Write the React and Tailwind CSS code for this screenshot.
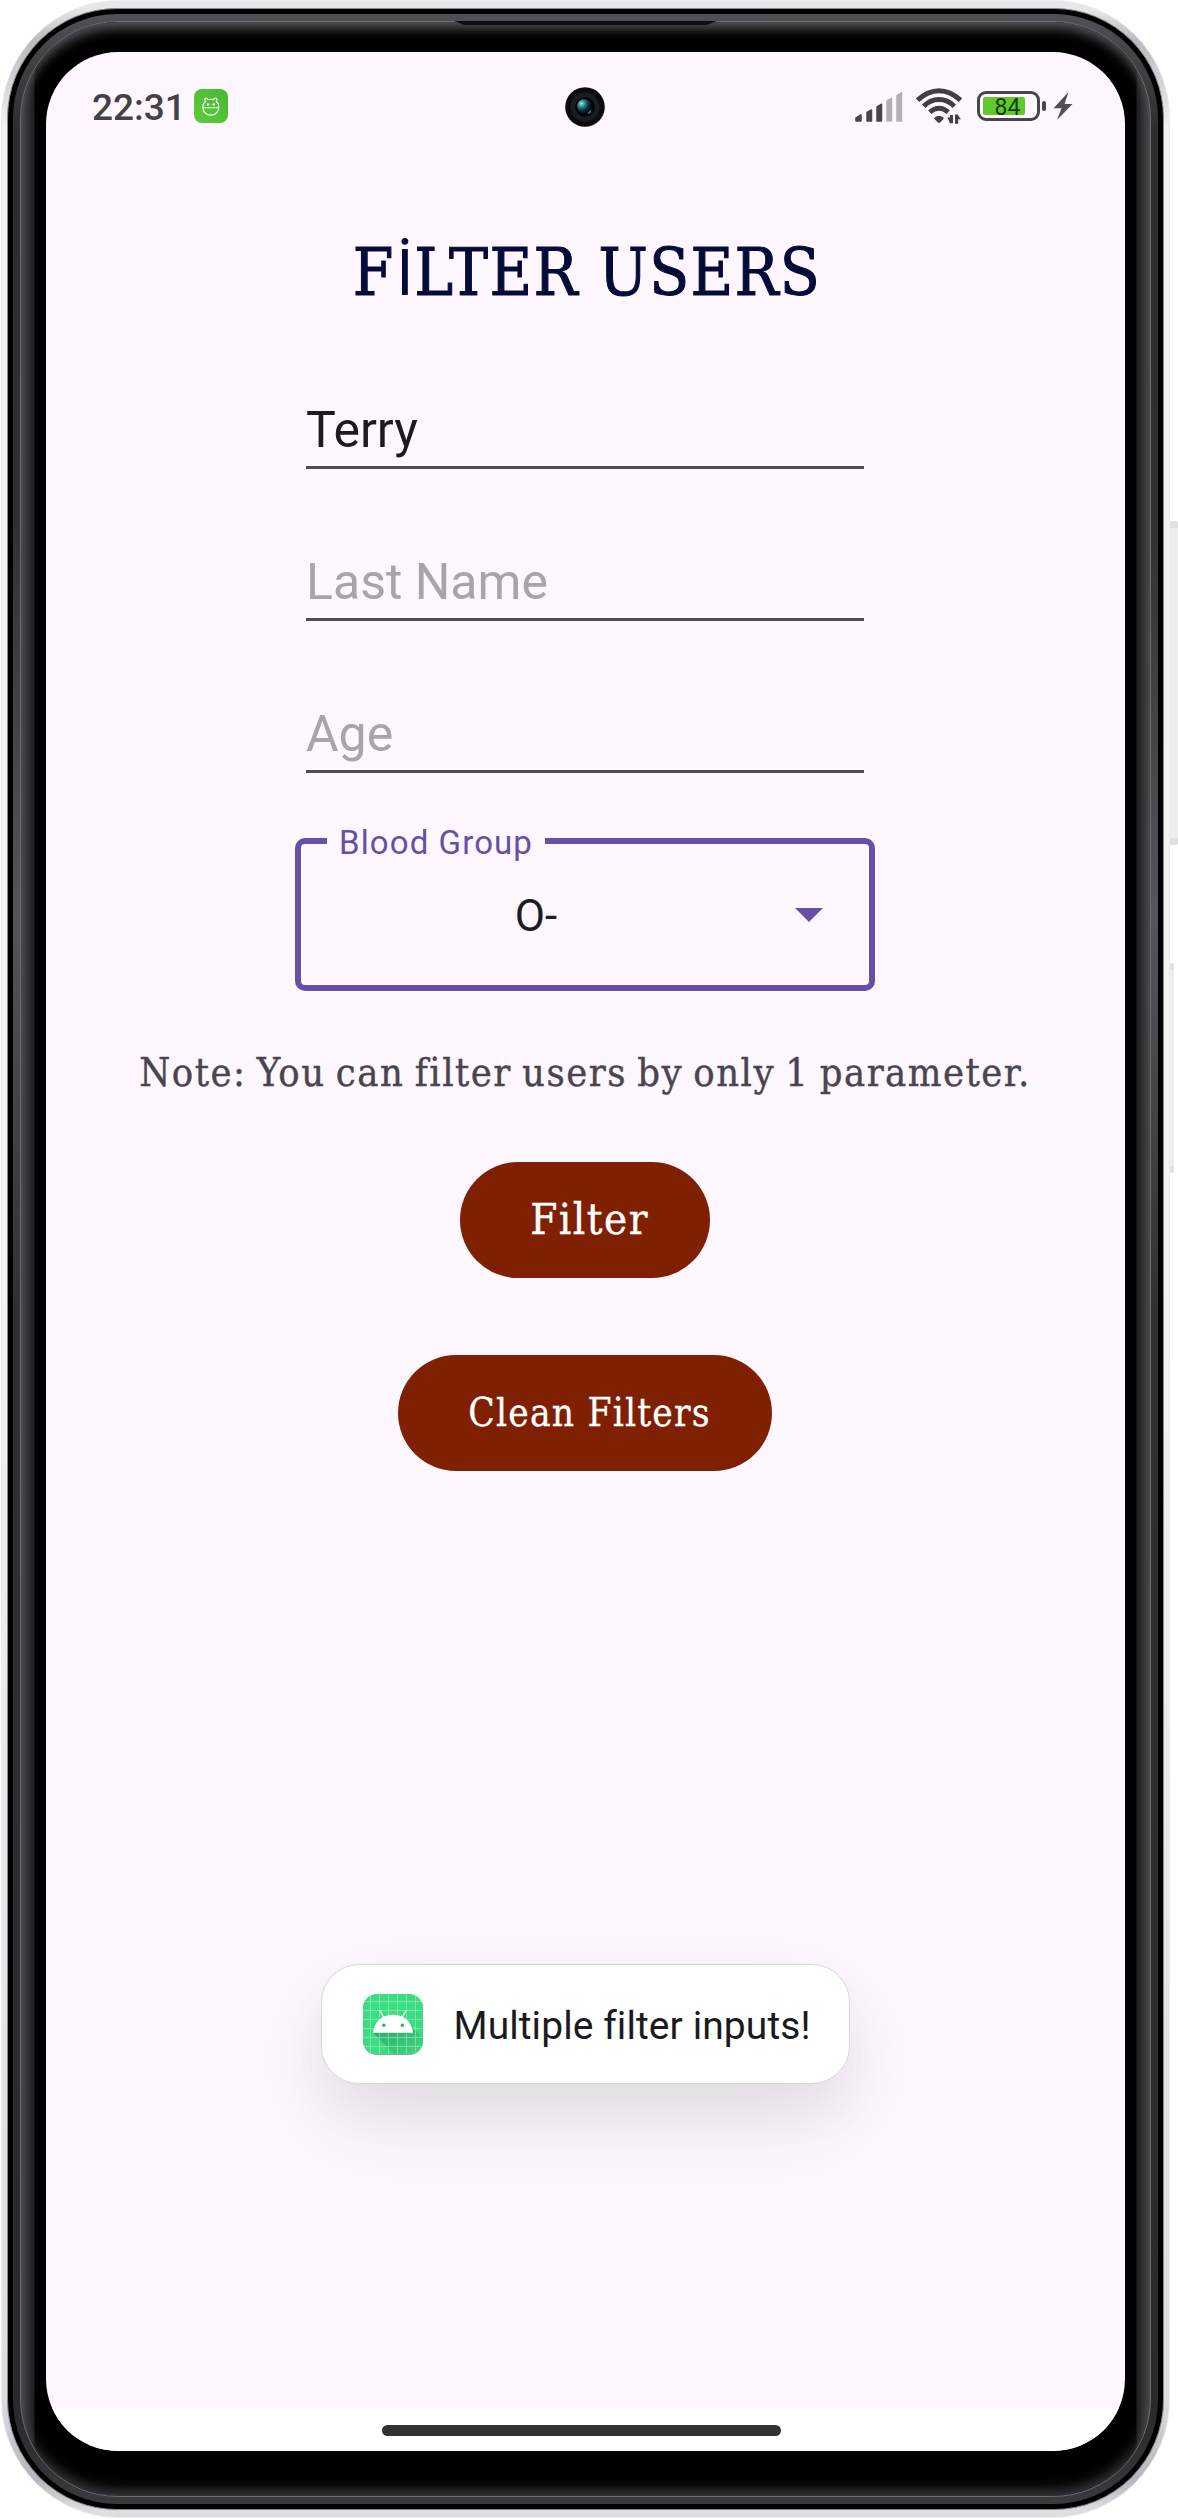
const serif = "font-['DejaVu_Serif_Condensed','DejaVu_Serif',serif] [font-stretch:condensed]";

function MascotIcon() {
  return (
    <svg viewBox="0 0 34 34" className="h-[34px] w-[34px] shrink-0">
      <defs>
        <linearGradient id="mascot" x1="0" y1="1" x2="1" y2="0">
          <stop offset="0" stopColor="#5ccb3c" />
          <stop offset="1" stopColor="#48b832" />
        </linearGradient>
      </defs>
      <rect width="34" height="34" rx="8" fill="url(#mascot)" />
      <g fill="none" stroke="#fff" strokeWidth="1.1" strokeLinejoin="round" strokeLinecap="round">
        <path d="M9 18.8h15.600v1.400c-1 3.800-4 5.900-7.800 5.900s-6.800-2.100-7.800-5.900z" />
        <path d="M9 18.800c-.5-2.400.2-4.600 2.500-6-1-1.600-1-2.900-.1-3.500 1.100-.6 2.100 0 2.700 1.500 1.700-.7 3.700-.7 5.400 0 .6-1.500 1.700-2.100 2.700-1.500.9.600.9 1.900-.1 3.500 2.300 1.400 3 3.600 2.500 6" />
      </g>
      <circle cx="14" cy="15.400" r="1.200" fill="#fff" />
      <circle cx="19.700" cy="15.400" r="1.200" fill="#fff" />
    </svg>
  );
}

function SignalIcon() {
  return (
    <svg viewBox="0 0 48 31" className="h-[31px] w-12" strokeLinejoin="round" strokeWidth="1.500">
      <g fill="#47464a" stroke="#47464a">
        <path d="M1 26.800L6 24v6H1z" />
        <path d="M12 21.500l4.500-2.500v11H12z" />
        <path d="M22 16l4.500-2.800V30H22z" />
      </g>
      <g fill="#b4afb6" stroke="#b4afb6">
        <path d="M32 10l4.500-2.700V30H32z" />
        <path d="M42 4.500l4.500-3V30H42z" />
      </g>
    </svg>
  );
}

function WifiIcon() {
  return (
    <svg viewBox="0 0 46 36" className="h-9 w-[46px]">
      <g fill="none" stroke="#413f43" strokeWidth="5">
        <path d="M1.500 12.300Q11.500 2.700 23 2.700t21.500 9.600" />
        <path d="M7.700 18.300Q14.500 11.600 23 11.600t15.300 6.700" />
        <path d="M13.800 24.300Q18 20.300 23 20.300t9.200 4" />
      </g>
      <path d="M23 28c-2 0-3.500.7-4.500 1.700-.4.500-.4 1 0 1.400l3.500 3.300c.6.600 1.400.6 2 0l3.500-3.300c.4-.4.400-.9 0-1.400C26.500 28.700 25 28 23 28z" fill="#413f43" />
      <path d="M31.300 29.500h2.700V27h3v8.300h-3zM39 26.600h2.500l3.500 4.600h-2.800v4.500H39z" fill="#413f43" />
    </svg>
  );
}

function Battery() {
  return (
    <div className="flex items-center gap-[2px]">
      <div className="h-[30px] w-[63px] rounded-[9px] border-[3px] border-[#47454a] p-[3px]">
        <div className="flex h-[18px] w-[42px] items-center justify-center rounded-[2px] bg-[#62c92d] pt-[2px] pl-[7px] font-['Roboto',sans-serif] text-[23px] leading-none text-[#173c08]">
          84
        </div>
      </div>
      <div className="h-[10px] w-1 rounded-[2px] bg-[#47454a]" />
    </div>
  );
}

function AppIcon() {
  const lines = [7.500, 16.500, 25.500, 34.500, 43.500, 52.500];
  return (
    <svg viewBox="0 0 60 61" className="h-[61px] w-[60px] shrink-0">
      <defs>
        <clipPath id="tile">
          <rect width="60" height="60" rx="14" />
        </clipPath>
        <linearGradient id="cast" x1="0" y1="0" x2="1" y2="1">
          <stop offset="0" stopColor="#2fa566" />
          <stop offset="1" stopColor="#3ddc84" />
        </linearGradient>
      </defs>
      <rect y="1" width="60" height="60" rx="14" fill="#8fa698" />
      <g clipPath="url(#tile)">
        <rect width="60" height="60" fill="#3ddc84" />
        <path d="M10 38.500L31 60h29V44L49 33l1 5.500z" fill="url(#cast)" />
        <g stroke="#a5f0c5" strokeWidth="0.700" opacity="0.800">
          {lines.map((n) => (
            <path key={n} d={`M0 ${n}H60M${n} 0V60`} />
          ))}
        </g>
      </g>
      <path d="M10 38.800C11 28 19 20.800 30 20.800s19 7.200 20 18z" fill="#fff" />
      <path d="M20.500 23L17 16.500M39.500 23L43 16.500" stroke="#fff" strokeWidth="1.400" strokeLinecap="round" />
      <circle cx="20.800" cy="31.300" r="1.700" fill="#2fae69" />
      <circle cx="39.400" cy="31.300" r="1.700" fill="#2fae69" />
    </svg>
  );
}

function Camera() {
  return (
    <svg viewBox="0 0 40 40" className="absolute top-[35px] left-[519px] h-10 w-10">
      <defs>
        <radialGradient id="lens" cx="0.3" cy="0.3" r="0.7">
          <stop offset="0" stopColor="#9fe9e2" />
          <stop offset="0.350" stopColor="#2b828a" />
          <stop offset="0.700" stopColor="#07303b" />
          <stop offset="1" stopColor="#020709" />
        </radialGradient>
      </defs>
      <circle cx="20" cy="20" r="19.800" fill="#0b0b0d" />
      <circle cx="20" cy="20" r="14.500" fill="#1c1b1f" />
      <circle cx="20" cy="20" r="9.800" fill="#020303" />
      <circle cx="19.500" cy="19.500" r="7.500" fill="url(#lens)" />
      <path d="M22.500 26l4-3.500-.8 3.300-2 1.200z" fill="#1987b5" />
    </svg>
  );
}

function Field({ text, className }) {
  return (
    <div className={`flex h-[152px] w-[558px] items-end border-b-[3px] border-[#504e53] pb-[7px] text-[50px] leading-[58px] ${className}`}>
      {text}
    </div>
  );
}

function StatusBar() {
  return (
    <div className="flex h-[34px] items-center justify-between pr-[52px] pl-[46px]">
      <div className="flex items-center gap-[13px]">
        <span className="w-[89px] pt-[3px] text-[37px] leading-[34px] font-medium whitespace-nowrap text-[#444246]">22:31</span>
        <MascotIcon />
      </div>
      <div className="flex items-center">
        <SignalIcon />
        <div className="w-[13px]" />
        <WifiIcon />
        <div className="w-[15px]" />
        <Battery />
        <svg viewBox="0 0 20 30" className="ml-[7px] h-[30px] w-5">
          <path d="M15.500 1L.500 17.300h8L4 29 19.500 13h-8z" fill="#504f53" />
        </svg>
      </div>
    </div>
  );
}

function Screen() {
  return (
    <div className="relative flex h-[2399px] w-[1079px] flex-col overflow-hidden rounded-[72px] bg-[#fef7ff] pt-[37px] font-['Roboto',sans-serif]">
      <StatusBar />
      <Camera />
      <main className="flex h-[2285px] flex-col items-center pr-px">
        <h1 className={`mt-[110px] flex h-[80px] items-center pl-1 text-[65px] leading-[80px] tracking-[1.300px] whitespace-nowrap text-[#040b38] [-webkit-text-stroke:1px_#040b38] ${serif}`}>
          <span>F</span>
          <span className="pl-[2px] font-['Roboto',sans-serif] [-webkit-text-stroke:0]">İ</span>
          <span>LTER USERS</span>
        </h1>
        <div className="mt-7 flex flex-col">
          <Field text="Terry" className="text-[#1d1b20] mt-[-24px]" />
          <Field text="Last Name" className="text-[#a9a4ab]" />
          <Field text="Age" className="text-[#a9a4ab]" />
        </div>
        <div className="relative mt-[65px] flex h-[153px] w-[580px] items-center rounded-[10px] border-6 border-[#6750a4]">
          <span className="absolute top-[-20px] left-[26px] bg-[#fef7ff] px-[12px] text-[33px] leading-[38px] tracking-[1.100px] whitespace-nowrap text-[#6750a4]">
            Blood Group
          </span>
          <span className="w-[470px] pt-[3px] text-center text-[44px] leading-[50px] text-[#1d1b20]">O-</span>
          <svg viewBox="0 0 28 14" className="ml-[24px] h-[14px] w-7">
            <path d="M0 0h28L14 14z" fill="#6750a4" />
          </svg>
        </div>
        <p className={`mt-[51px] h-[63px] text-[39.500px] leading-[60px] tracking-[1.500px] [word-spacing:-2.500px] whitespace-nowrap text-[#49454f] [-webkit-text-stroke:0.4px_#49454f] ${serif}`}>
          Note: You can filter users by only 1 parameter.
        </p>
        <button className={`mt-[57px] h-[116px] w-[250px] rounded-full bg-[#7f2003] pl-[9px] text-[43.500px] leading-none tracking-[1.500px] whitespace-nowrap text-white [-webkit-text-stroke:0.4px_#fff] ${serif}`}>
          Filter
        </button>
        <button className={`mt-[77px] h-[116px] w-[374px] rounded-full bg-[#7f2003] pl-[9px] text-[38.500px] leading-none tracking-[1.200px] whitespace-nowrap text-white [-webkit-text-stroke:0.3px_#fff] ${serif}`}>
          Clean Filters
        </button>
        <div className="mt-[493px] flex h-[120px] w-[529px] items-center rounded-[38px] border border-[#d9d5da] bg-white pl-[41px] shadow-[0_36px_96px_rgba(0,0,0,0.09),0_30px_50px_rgba(0,0,0,0.04)]">
          <AppIcon />
          <span className="ml-[31px] pt-[3px] text-[39px] leading-[46px] tracking-[0.080px] whitespace-nowrap text-[#1b1b1f]">Multiple filter inputs!</span>
        </div>
      </main>
      <div className="flex flex-1 items-start justify-center bg-white pt-[17px] pr-[8px]">
        <div className="h-[11px] w-[399px] rounded-full bg-[#323232]" />
      </div>
    </div>
  );
}

export default function App() {
  return (
    <div className="flex h-[2519px] w-[1178px] overflow-hidden bg-white pl-px">
      <div className="h-[2518px] w-[1169px] shrink-0 rounded-[118px] border border-[#ececee] bg-[linear-gradient(to_bottom,#e6e7e9_0,#e6e7e9_8px,#b9bac1_40px,#f1f1f2_125px,#f3f3f4_1250px,#dcdbe0_2400px,#b4b5bd_2478px,#dedde2_2510px)] pt-[7px] pl-[5px]">
        <div className="h-[2502px] w-[1157px] rounded-[110px] border border-[#8a8990] bg-black p-[5px]">
          <div className="h-full w-full rounded-[104px] bg-[linear-gradient(to_bottom,#505056,#2c2b30_120px,#303034_500px,#55545a_900px,#303034_1300px,#2a292e_2400px,#3a393f)] p-[7px]">
            <div className="h-[2476px] w-[1131px] rounded-[98px] border border-[#6d6c71] bg-black bg-[linear-gradient(to_right,#47464c_0,#1f1e22_13px,transparent_14px,transparent_1115px,#1f1e22_1116px,#47464c_1129px)] pt-[30px] pl-[25px] shadow-[inset_0_10px_12px_-4px_#58575d,inset_0_-10px_14px_-5px_#404046]">
              <Screen />
            </div>
          </div>
        </div>
      </div>
      <div className="flex flex-col items-start pt-[521px]">
        <div className="h-[324px] w-2 rounded-r-[2px] border-y-[7px] border-[#dfe0e1] bg-[#ededee]" />
        <div className="mt-[118px] h-[210px] w-[4px] rounded-r-[2px] border-y-[7px] border-[#e0e1e2] bg-[#efeff0]" />
      </div>
      <div className="absolute top-[21px] left-[454px] h-[4px] w-[263px] bg-[#0d0c12] [clip-path:polygon(0_0,100%_0,96%_100%,4%_100%)]" />
    </div>
  );
}
